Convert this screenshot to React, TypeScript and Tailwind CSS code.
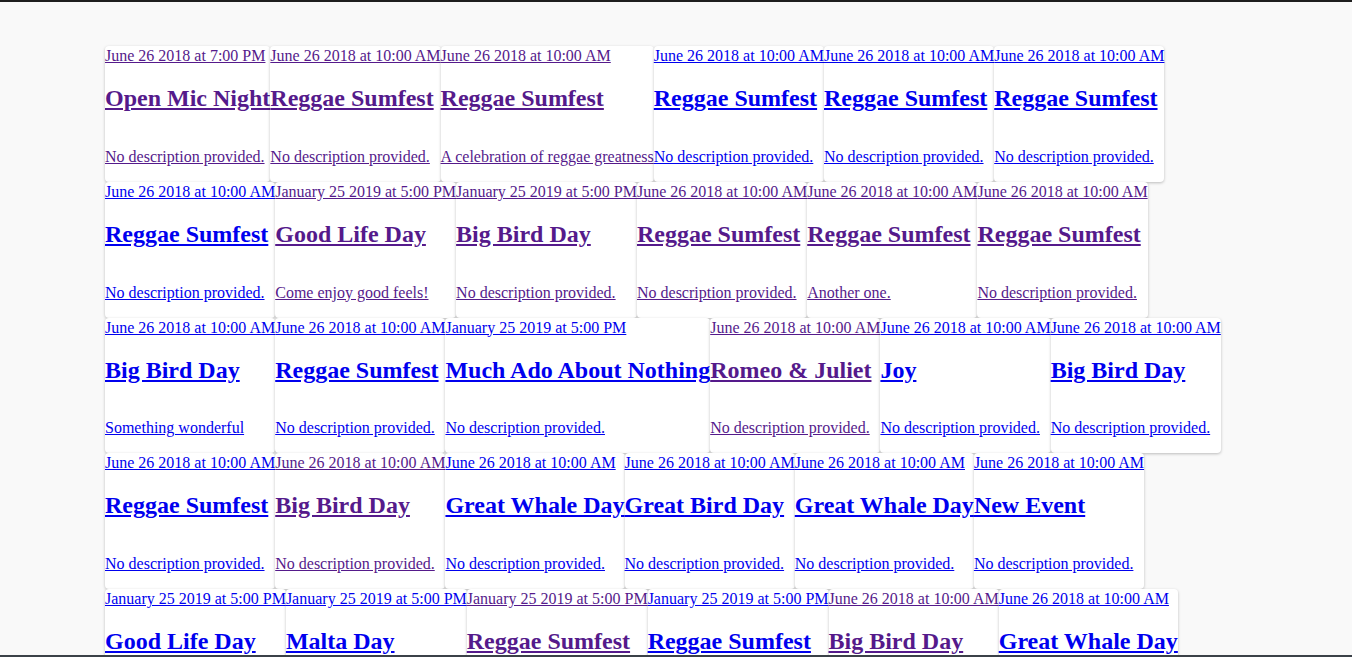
type Event = {
  date: string;
  title: string;
  description: string;
  visited: boolean;
};

const JUNE = "June 26 2018 at 10:00 AM";
const JAN = "January 25 2019 at 5:00 PM";
const NONE = "No description provided.";

const events: Event[] = [
  { date: "June 26 2018 at 7:00 PM", title: "Open Mic Night", description: NONE, visited: true },
  { date: JUNE, title: "Reggae Sumfest", description: NONE, visited: true },
  { date: JUNE, title: "Reggae Sumfest", description: "A celebration of reggae greatness", visited: true },
  { date: JUNE, title: "Reggae Sumfest", description: NONE, visited: false },
  { date: JUNE, title: "Reggae Sumfest", description: NONE, visited: false },
  { date: JUNE, title: "Reggae Sumfest", description: NONE, visited: false },

  { date: JUNE, title: "Reggae Sumfest", description: NONE, visited: false },
  { date: JAN, title: "Good Life Day", description: "Come enjoy good feels!", visited: true },
  { date: JAN, title: "Big Bird Day", description: NONE, visited: true },
  { date: JUNE, title: "Reggae Sumfest", description: NONE, visited: true },
  { date: JUNE, title: "Reggae Sumfest", description: "Another one.", visited: true },
  { date: JUNE, title: "Reggae Sumfest", description: NONE, visited: true },

  { date: JUNE, title: "Big Bird Day", description: "Something wonderful", visited: false },
  { date: JUNE, title: "Reggae Sumfest", description: NONE, visited: false },
  { date: JAN, title: "Much Ado About Nothing", description: NONE, visited: false },
  { date: JUNE, title: "Romeo & Juliet", description: NONE, visited: true },
  { date: JUNE, title: "Joy", description: NONE, visited: false },
  { date: JUNE, title: "Big Bird Day", description: NONE, visited: false },

  { date: JUNE, title: "Reggae Sumfest", description: NONE, visited: false },
  { date: JUNE, title: "Big Bird Day", description: NONE, visited: true },
  { date: JUNE, title: "Great Whale Day", description: NONE, visited: false },
  { date: JUNE, title: "Great Bird Day", description: NONE, visited: false },
  { date: JUNE, title: "Great Whale Day", description: NONE, visited: false },
  { date: JUNE, title: "New Event", description: NONE, visited: false },

  { date: JAN, title: "Good Life Day", description: NONE, visited: false },
  { date: JAN, title: "Malta Day", description: NONE, visited: false },
  { date: JAN, title: "Reggae Sumfest", description: NONE, visited: true },
  { date: JAN, title: "Reggae Sumfest", description: NONE, visited: false },
  { date: JUNE, title: "Big Bird Day", description: NONE, visited: true },
  { date: JUNE, title: "Great Whale Day", description: NONE, visited: false },
];

const EventCard = ({ event }: { event: Event }) => (
  <a
    href="#"
    className={`flex flex-col pt-px bg-white rounded shadow-[0_1px_3px_rgba(0,0,0,0.25)] underline ${
      event.visited ? "text-[#551a8b]" : "text-[#0000ee]"
    }`}
  >
    <span className="text-[16px] leading-[normal]">{event.date}</span>
    <h2 className="text-[24px] leading-[normal] font-bold my-[0.83em]">{event.title}</h2>
    <p className="text-[16px] leading-[normal] my-4">{event.description}</p>
  </a>
);

const App = () => {
  return (
    <div className="h-screen overflow-hidden bg-[#f9f9f9] border-t-2 border-b-2 border-t-[#1e1e1e] border-b-[#3b4148] font-['Liberation_Serif','Times_New_Roman',serif]">
      <div className="flex flex-wrap content-start pt-[44px] px-[105px]">
        {events.map((event, i) => (
          <EventCard key={i} event={event} />
        ))}
      </div>
    </div>
  );
};

export default App;
